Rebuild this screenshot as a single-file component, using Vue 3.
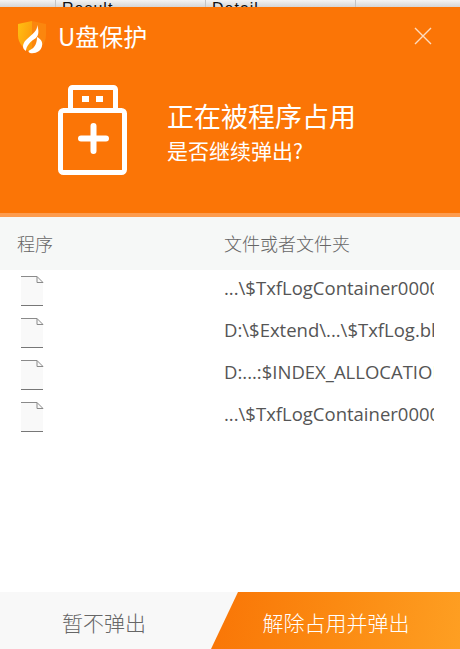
<template>
  <div class="window">
    <div class="backdrop">
      <div v-for="col in backdropCols" :key="col" class="backdrop-col">
        <span>{{ col }}</span>
      </div>
    </div>

    <div class="hero">
      <div class="titlebar">
        <svg class="logo" width="30" height="35" viewBox="0 0 30 35">
          <defs>
            <linearGradient id="shieldLeft" x1="0" y1="0" x2="1" y2="0.6">
              <stop offset="0" stop-color="#ffc012" />
              <stop offset="1" stop-color="#fd9a0c" />
            </linearGradient>
          </defs>
          <path d="M1 4 L15 1 V33 C7 29 1 24 1 15 Z" fill="url(#shieldLeft)" />
          <path d="M15 1 L29 4 V15 C29 24 23 29 15 33 Z" fill="#fb860e" />
          <path d="M20 5 C21 11 15 14 9 20 C5 24 5 29 9 31 C9 26 14 21 19 18 C22 15 22 10 20 5 Z" fill="#ffffff" />
          <path d="M20 17 C24 19 26 22 25 26 C24 31 19 34 13 33 C11 32 11 31 13 30 C18 28 20 23 20 17 Z" fill="#ffffff" />
        </svg>
        <span class="app-name">U盘保护</span>
        <svg class="close" width="18" height="18" viewBox="0 0 18 18">
          <path d="M1 1 L17 17 M17 1 L1 17" stroke="#fcdcc0" stroke-width="1.4" fill="none" />
        </svg>
      </div>
      <div class="message">
        <svg class="usb" width="72" height="92" viewBox="0 0 72 92">
          <path d="M13.500 26 V5.500 A2 2 0 0 1 15.500 3.500 H56.500 A2 2 0 0 1 58.500 5.500 V26" fill="none" stroke="#fff" stroke-width="5" />
          <rect x="25" y="12" width="7" height="6" fill="#fff" />
          <rect x="39" y="12" width="7" height="6" fill="#fff" />
          <rect x="3.500" y="26.500" width="64" height="62" rx="3" fill="none" stroke="#fff" stroke-width="5" />
          <path d="M36.500 42 V67 M24 54.500 H49" stroke="#fff" stroke-width="6" stroke-linecap="round" fill="none" />
        </svg>
        <div class="message-text">
          <div class="headline">正在被程序占用</div>
          <div class="question">是否继续弹出?</div>
        </div>
      </div>
    </div>

    <div class="table">
      <div class="table-head">
        <span class="col-program">程序</span>
        <span class="col-path">文件或者文件夹</span>
      </div>
      <div v-for="(path, i) in rows" :key="i" class="row">
        <div class="col-program">
          <svg class="file-icon" width="24" height="30" viewBox="0 0 24 30">
            <path d="M0 0.500 H16 L22 6 V29 H0 Z" fill="#f9f9f9" />
            <path d="M0 0.500 H16 V6.500 H22 L16 0.500" fill="none" stroke="#8a8a8a" />
            <path d="M0 29.500 H22" stroke="#777" />
          </svg>
        </div>
        <div class="col-path path-text">{{ path }}</div>
      </div>
    </div>

    <div class="footer">
      <button class="btn-later">暂不弹出</button>
      <button class="btn-eject">解除占用并弹出</button>
    </div>
  </div>
</template>

<script setup>
const backdropCols = ['Result', 'Detail', '']

const rows = [
  '...\\$TxfLogContainer00000000000000000001',
  'D:\\$Extend\\...\\$TxfLog.blf',
  'D:...:$INDEX_ALLOCATION',
  '...\\$TxfLogContainer00000000000000000002',
]
</script>

<style>
html, body {
  margin: 0;
  background: #fff;
}
</style>

<style scoped>
.window {
  width: 460px;
  height: 649px;
  display: flex;
  flex-direction: column;
  overflow: hidden;
  font-family: "Noto Sans CJK SC", "Noto Sans", sans-serif;
  background: #fff;
}

.backdrop {
  height: 7px;
  flex-shrink: 0;
  display: flex;
  padding-left: 55px;
  overflow: hidden;
  background: linear-gradient(#f4f4f4, #d6d6d6);
}

.backdrop-col {
  width: 150px;
  flex-shrink: 0;
  box-sizing: border-box;
  border-left: 1px solid #c4c4c4;
  padding-left: 6px;
  font: 16px/1 "Liberation Sans", sans-serif;
  letter-spacing: 1px;
  color: #111;
}

.backdrop-col span {
  display: block;
  margin-top: 1px;
}

.hero {
  height: 206px;
  flex-shrink: 0;
  background: #fb7506;
  border-bottom: 4px solid #fd9c4e;
  color: #fff;
}

.titlebar {
  display: flex;
  align-items: center;
  height: 60px;
  padding: 0 28px 2px 17px;
  box-sizing: border-box;
}

.logo {
  flex-shrink: 0;
  margin-top: 3px;
}

.app-name {
  margin-left: 11px;
  font-size: 24px;
  line-height: 1;
}

.close {
  margin-left: auto;
}

.message {
  display: flex;
  align-items: center;
  margin-top: 17px;
  padding-left: 57px;
}

.message-text {
  margin-left: 38px;
  margin-top: 6px;
}

.headline {
  font-size: 27px;
  line-height: 34px;
}

.question {
  font-size: 21px;
  line-height: 34px;
}

.table {
  flex: 1;
  min-height: 0;
}

.table-head {
  display: flex;
  align-items: center;
  height: 53px;
  padding-bottom: 2px;
  box-sizing: border-box;
  background: #f6f8f7;
  color: #666;
  font-size: 18px;
  font-weight: 300;
}

.col-program {
  width: 224px;
  flex-shrink: 0;
  padding-left: 17px;
  box-sizing: border-box;
}

.col-path {
  width: 210px;
}

.row {
  display: flex;
  align-items: center;
  height: 42px;
}

.row .col-program {
  padding-left: 21px;
}

.file-icon {
  display: block;
}

.path-text {
  overflow: hidden;
  white-space: nowrap;
  padding-bottom: 8px;
  color: #555;
  font-family: "Open Sans", "Noto Sans", sans-serif;
  font-size: 18.500px;
}

.footer {
  position: relative;
  display: flex;
  height: 57px;
  flex-shrink: 0;
  background: #f8f8f8;
}

.footer button {
  border: none;
  padding: 3px 0 0;
  background: none;
  font: inherit;
  font-size: 21px;
  font-weight: 300;
}

.btn-later {
  width: 208px;
  color: #666;
}

.btn-eject {
  flex: 1;
  margin-left: 3px;
  padding-left: 1px !important;
  color: #fff;
  background: linear-gradient(100deg, #f97506 0%, #fb8a12 50%, #fe9f22 100%) !important;
  clip-path: polygon(27px 0, 100% 0, 100% 100%, 0 100%);
}
</style>
